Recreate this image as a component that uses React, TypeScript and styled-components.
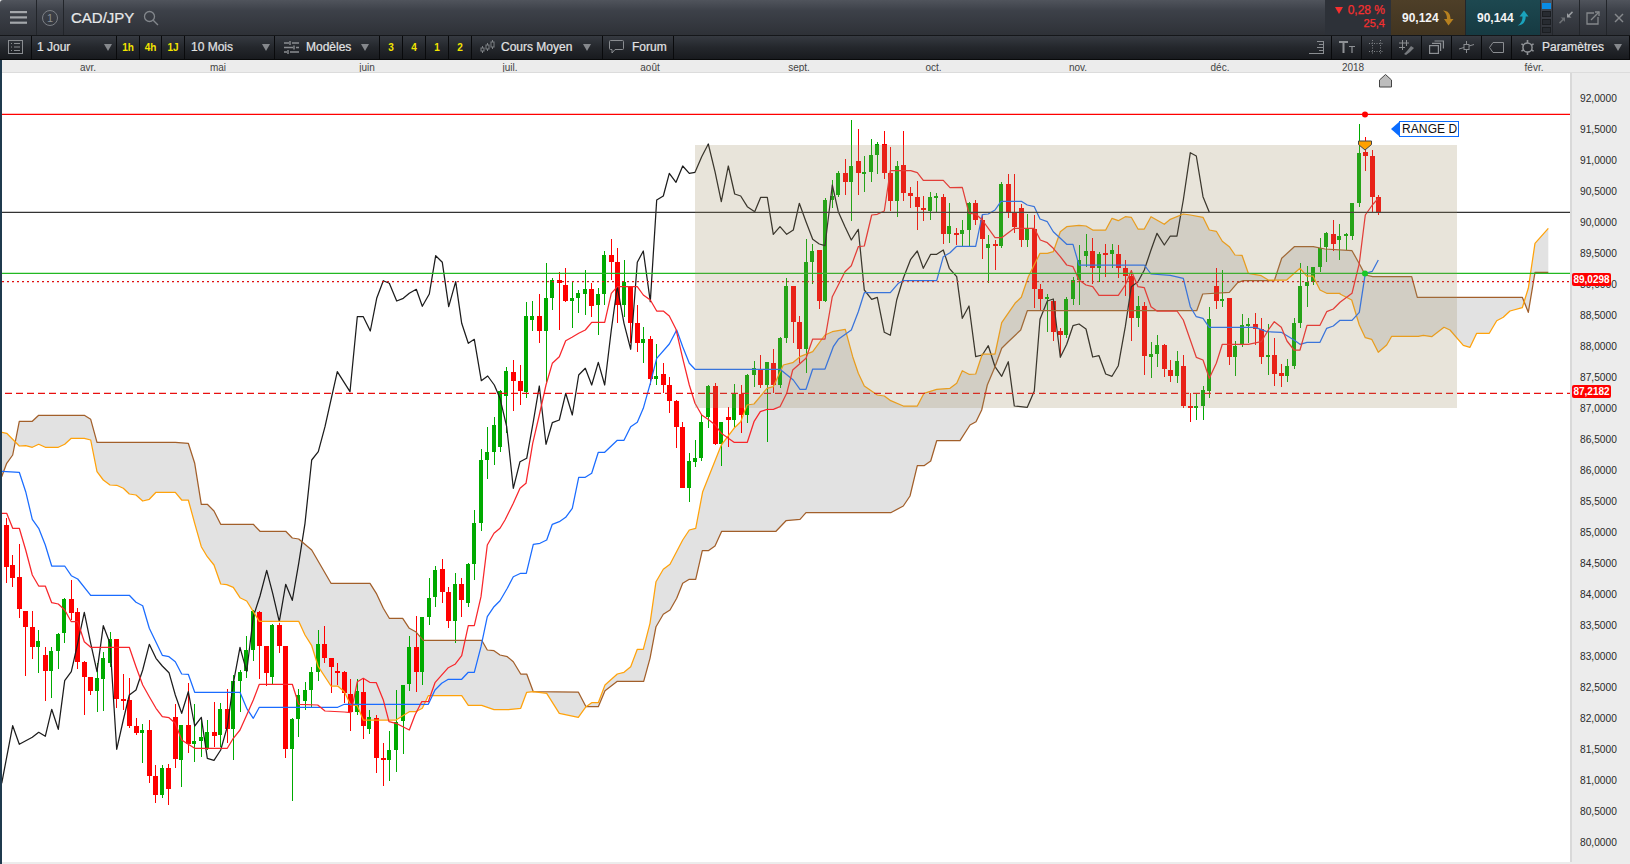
import React from "react";
import styled, { createGlobalStyle } from "styled-components";

const GlobalStyle = createGlobalStyle`
  html, body { margin: 0; padding: 0; width: 1630px; height: 864px; overflow: hidden; background: #ececec; }
  body { font-family: "Liberation Sans", Arial, sans-serif; }
`;

/* ---------- page frame ---------- */
const Page = styled.div`
  width: 1630px; height: 864px; display: flex; flex-direction: column; overflow: hidden;
`;
const TopBar = styled.div`
  height: 35px; flex: none; display: flex; align-items: stretch;
  background: linear-gradient(#50545c 0%, #3d4149 30%, #2e3137 100%);
  border-bottom: 1px solid #15171a; border-top-left-radius: 3px;
`;
const TopCell = styled.div<{ $w: number; $last?: boolean }>`
  width: ${(p) => p.$w}px; flex: none; box-sizing: border-box; display: flex; align-items: center; justify-content: center;
  border-right: ${(p) => (p.$last ? "none" : "1px solid #22252a")};
`;
const StepCircle = styled.div`
  width: 14px; height: 14px; border: 1.5px solid #7c8086; border-radius: 50%; color: #8a8e93;
  font-size: 11px; line-height: 14px; text-align: center;
`;
const Title = styled.div`
  margin-left: 7px; color: #e8e9ea; font-size: 15px; line-height: 35px; -webkit-text-stroke: 0.2px #e8e9ea;
`;
const SearchWrap = styled.div`
  margin-left: 9px; display: flex; align-items: center;
`;
const Grow = styled.div`
  flex: 1;
`;
const Change = styled.div`
  width: 66px; flex: none; box-sizing: border-box; padding: 4px 6px 0 0; background: #2d3138;
  display: flex; flex-direction: column; align-items: flex-end; color: #f62f2f;
  -webkit-text-stroke: 0.25px #f62f2f;
`;
const ChangeLine = styled.div<{ $size: number }>`
  font-size: ${(p) => p.$size}px; line-height: 13px; display: flex; align-items: center; gap: 5px;
`;
const DownTriangle = styled.span`
  width: 0; height: 0; border-left: 4px solid transparent; border-right: 4px solid transparent; border-top: 7px solid #f62f2f;
`;
const Quote = styled.div<{ $bg: string }>`
  width: 75px; flex: none; box-sizing: border-box; padding-left: 11px; display: flex; align-items: center; gap: 3px;
  background: ${(p) => p.$bg}; color: #f4f4f4; font-size: 12px; font-weight: 700; border-right: 1px solid #23262b;
`;
const Layers = styled.div`
  width: 12px; flex: none; box-sizing: border-box; padding: 3px 1px 0 1px; display: flex; flex-direction: column; gap: 2px;
  border-right: 1px solid #23262b;
`;
const LayerDot = styled.div<{ $on?: boolean }>`
  height: 6px; background: ${(p) => (p.$on ? "#0b8ce4" : "#272b31")}; border: ${(p) => (p.$on ? "none" : "1px solid #1b1e22")};
  box-sizing: border-box;
`;
const ToolBar = styled.div`
  height: 23px; flex: none; display: flex; align-items: stretch; color: #e2e3e4; font-size: 12px;
  -webkit-text-stroke: 0.2px #e2e3e4;
  background: linear-gradient(#363a41 0%, #24272c 50%, #181a1e 100%);
  border-bottom: 1px solid #08090a;
`;
const ToolCell = styled.div<{ $w: number; $pl?: number; $pr?: number; $gap?: number }>`
  width: ${(p) => p.$w}px; flex: none; box-sizing: border-box; display: flex; align-items: center;
  justify-content: ${(p) => (p.$pl === undefined ? "center" : "flex-start")};
  padding: 0 ${(p) => p.$pr ?? 0}px 1px ${(p) => p.$pl ?? 0}px; gap: ${(p) => p.$gap ?? 0}px;
  border-right: 1px solid #090a0c;
`;
const QuickPick = styled.span`
  color: #f2e400; font-size: 10px; font-weight: 700; -webkit-text-stroke: 0;
`;
const Caret = styled.span`
  margin-left: auto; width: 0; height: 0; border-left: 4.5px solid transparent; border-right: 4.5px solid transparent;
  border-top: 7px solid #85888c;
`;
const Work = styled.div`
  flex: 1; min-height: 0; display: flex; flex-direction: column; border-left: 2px solid #1f3a4e;
`;
const TimeAxis = styled.div`
  height: 12px; flex: none; display: flex; overflow: hidden; background: #ececec; border-bottom: 1px solid #dcdcdc;
`;
const TimeTick = styled.div<{ $w: number }>`
  width: ${(p) => p.$w}px; flex: none; text-align: center; font-size: 10px; line-height: 15px; color: #444;
`;
const ChartRow = styled.div`
  flex: 1; min-height: 0; display: flex; position: relative;
`;
const ChartArea = styled.div`
  width: 1568px; flex: none; background: #fff; position: relative;
`;
const ChartSvg = styled.svg`
  display: block;
`;
const PriceAxis = styled.div`
  width: 60px; flex: none; box-sizing: border-box; padding: 10px 0 0 8px; overflow: hidden;
  border-left: 2px solid #d9d9d9; background: #ececec;
`;
const PriceLabel = styled.div`
  height: 31px; line-height: 31px; font-size: 10.2px; color: #2a2a2a;
`;
const PriceBadge = styled.div<{ $top: number }>`
  position: absolute; left: 1570px; top: ${(p) => p.$top}px; width: 39px; height: 13px; border-radius: 2px;
  background: #f00; color: #fff; font-size: 10px; font-weight: 700; line-height: 13px; text-align: center;
`;
const RangeTag = styled.div`
  position: absolute; left: 1397px; top: 48px; width: 60px; height: 16px; box-sizing: border-box;
  border: 1px solid #0a6cff; background: #fff; color: #111; font-size: 12px; line-height: 14px; padding-left: 2px;
  letter-spacing: 0.1px; white-space: nowrap;
  &::before {
    content: ""; position: absolute; left: -9px; top: 0; width: 0; height: 0;
    border-top: 7px solid transparent; border-bottom: 7px solid transparent; border-right: 8px solid #0a6cff;
  }
`;
const BottomEdge = styled.div`
  height: 2px; flex: none; background: #ececec;
`;

/* ---------- chart data: points read from crops, [crop origin] + crop px / 3 ---------- */
const seg = (ox: number, oy: number, s: string) =>
  s.trim().split(/\s+/).map((p) => {
    const [x, y] = p.split(",").map(Number);
    return [ox + x / 3, oy + y / 3] as [number, number];
  });
type Pt = [number, number];
const toPath = (pts: Pt[]) => pts.map(([x, y]) => `${x.toFixed(1)},${y.toFixed(1)}`).join(" ");

const chikou: Pt[] = [
  ...seg(0, 400, "5,1150 38,977 58,1033 97,1012 116,997 136,1009 155,928 175,988 194,842 214,815 233,730 253,637 272,730 291,815 310,677 330,730 350,1048 370,960 388,885 408,870 428,810 448,733 468,775 487,798 507,818 526,885 545,940 565,875 584,978 604,952 622,1075 642,1081 662,1050 682,980 700,850 720,742 740,815 760,650 780,588 800,511 818,580 838,665 857,553 877,601 896,490 915,370 935,180 955,155 975,80"),
  ...seg(300, 230, "112,425 150,485 172,260 190,260 211,303 230,205 250,152 268,160 290,213 310,205 328,190 349,178 367,229 388,192 407,77 427,97 446,230 467,155 485,280 505,340 523,328 544,452 563,438 583,465 600,505"),
  ...seg(500, 100, "20,980 40,1165 60,1085 80,1075 100,965 118,858 138,1033 157,968 178,960 197,880 217,945 236,825 256,805 275,855 295,787 314,855 334,690 352,560 372,670 392,748 412,487 430,453 451,605 470,300 490,288 508,220 528,247 548,198 568,220 585,217 605,170 625,132 645,215 664,305 685,198 704,282 722,288 742,320 764,335 782,292 802,292 820,403 840,380 860,403 880,390 898,310 918,365 938,418 958,432 975,437 997,255 1015,335 1035,380 1054,420 1075,388 1093,570 1115,598 1132,592 1153,697 1171,706 1190,600 1210,535 1232,478 1252,453 1270,505 1292,463 1310,463 1330,450 1348,505 1370,530"),
  ...seg(900, 100, "187,655 207,618 227,770 247,765 265,737 285,800 305,829 325,785 343,918 382,922 403,873 420,658 442,603 460,597 481,772 500,733 519,677 537,672 558,687 578,771 597,767 617,822 636,829 655,797 676,680 694,560 714,545 733,510 753,450 771,400 793,435 811,408 831,408 850,300 871,158 889,168 909,290 928,337"),
];
const tenkan: Pt[] = [
  ...seg(0, 400, "5,340 20,340 38,385 58,385 77,450 97,525 116,558 136,558 155,608 175,612 194,630 214,665 233,665 253,725 272,742 388,742 408,800 428,855 448,890 468,925 487,950 507,953 526,970 545,1020 565,1033 584,1045 682,1045 700,1015 720,990 740,945 760,900 778,853 877,853 896,913 953,915 975,933 1033,936 1052,938 1060,905 1072,845 1090,835 1109,847 1129,848 1150,900 1167,965 1188,970 1228,990 1245,945 1265,905 1285,905 1305,848 1345,803 1365,793 1385,767 1405,677 1423,677 1443,590 1462,435 1482,400 1500,385"),
  ...seg(500, 100, "15,1260 40,1210 60,1165 78,1150 98,1030 118,945 138,855 157,790 178,770 197,722 216,712 236,700 256,690 275,667 314,667 334,580 352,560 412,560 430,585 451,600 470,633 490,633 508,648 528,688 548,775 568,855 585,910 605,945 624,958 646,975 664,1000 702,1027 742,1027 762,965 781,935 801,928 820,928 840,920 860,880 878,810 918,775 938,717 975,717 997,590 1015,555 1035,515 1054,497 1075,440 1093,438 1115,345 1132,343 1153,333 1171,212 1232,212 1252,218 1270,241 1330,241 1350,263"),
  ...seg(900, 100, "187,262 207,340 227,342 247,360 285,413 305,413 325,398 343,385 403,385 421,420 442,428 460,445 481,470 500,495 519,500 537,540 558,555 578,560 597,586 655,586 676,555 694,512 714,560 733,563 753,620 771,633 831,633 850,660 871,720 889,772 909,780 928,835 949,790 967,733 1045,733 1084,725 1105,690 1123,665 1144,682 1161,723 1182,750 1200,750 1221,676 1260,676 1280,635 1300,627 1320,607 1356,580"),
  ...seg(1280, 80, "238,550 256,405 277,375 295,355"),
];
const kijun: Pt[] = [
  ...seg(0, 400, "5,214 58,217 77,275 97,358 116,385 136,435 155,498 194,498 214,527 233,537 272,586 388,586 408,607 428,617 448,685 487,766 507,770 526,785 545,822 565,823 584,877 720,877 740,925 760,955 778,922 1013,922 1033,913 1285,913 1305,870 1325,850 1345,838 1385,838 1405,817 1423,817 1443,740 1462,650 1482,620"),
  ...seg(500, 480, "0,362 22,325 40,290 62,280 79,280 100,193 120,190 140,180 157,133 178,125 197,112 217,85"),
  ...seg(500, 100, "236,1132 256,1132 275,1120 295,1057 314,1057 352,1021 372,1021 392,980 412,967 430,925 451,850 470,775 508,732 530,690 548,740 568,790 585,808 840,808 880,840 900,868 918,868 938,807 975,807 1000,740 1015,718 1054,690 1075,635 1093,578 1171,578 1195,550 1210,542 1310,542 1330,470 1350,458 1370,439"),
  ...seg(900, 100, "227,439 247,344 265,342 285,330 303,304 364,304 382,315 403,320 420,357 442,365 460,395 481,415 500,433 519,433 537,495 733,495 753,522 811,526 850,535 871,620 889,650 909,655 928,682 1066,682 1100,695 1144,697 1182,720 1200,733 1221,727 1260,727 1280,685 1300,678 1320,661 1356,661"),
  ...seg(1280, 80, "238,697 256,580 277,574 295,540"),
];
const spanA: Pt[] = [
  ...seg(0, 400, "5,97 20,100 58,138 77,137 97,142 116,133 136,142 175,142 194,133 214,115 253,115 272,120 291,215 310,240 330,255 350,256 370,265 388,282 408,285 428,303 448,298 468,277 526,277 545,300 565,300 584,370 604,440 622,470 642,495 662,552 680,554 700,562 720,593 740,603 778,664 896,664 915,705 935,737 955,800 993,858 1013,858 1033,875 1052,915 1072,917 1090,960 1188,960 1228,935 1247,935 1267,925 1285,887 1385,887 1405,916 1445,916 1482,929 1525,929"),
  ...seg(500, 480, "62,685 80,637 100,635 140,640 178,700 235,712 258,680 275,668 295,668 315,615 352,582 372,577 392,560 412,508 430,508 450,430 468,305 490,268 510,253 548,180 568,150 587,145"),
  ...seg(500, 100, "608,1175 664,1035 702,985 722,965 741,915 762,912 801,865 820,860 850,795 878,788 900,770 938,755 975,705 997,695 1036,688 1058,770 1075,820 1093,858 1132,885 1153,888 1172,902 1210,918 1252,918 1272,880 1310,868 1350,865 1370,850"),
  ...seg(900, 100, "187,812 207,823 227,822 247,762 285,762 305,668 345,610 364,592 385,530 420,460 442,460 460,455 481,395 500,380 537,376 558,378 578,390 617,390 636,355 655,362 676,350 694,352 714,387 733,387 753,350 793,373 811,358 850,342 871,345 909,352 928,390 949,394 967,424 988,440 1005,465 1026,466 1045,520 1084,527 1105,540 1160,540 1200,505 1220,528 1239,528 1260,570 1280,580 1320,580"),
  ...seg(1280, 80, "180,642 215,660 238,735 256,773 275,778 295,817 320,795 335,769 415,769 430,766 455,770 492,742 510,750 550,796 570,802 590,760 628,760 650,722 670,712 690,693 727,683 745,625 765,490 805,445"),
];
const spanB: Pt[] = [
  ...seg(0, 400, "5,230 20,190 38,165 58,64 97,64 116,46 253,46 272,58 291,127 526,127 565,130 584,190 604,313 622,313 642,333 662,373 760,373 780,394 857,394 877,414 896,417 935,450 993,550 1110,550 1129,580 1150,625 1168,655 1208,655 1228,685 1247,695 1270,721 1445,721 1462,750 1482,752"),
  ...seg(500, 480, "0,525 22,530 40,545 62,582 80,582 100,635 235,636 258,680 295,680 315,632 352,604 431,604 450,535 468,440 490,403 510,390 530,355 548,310 568,298 587,298 607,212 625,212 645,198 665,154 828,154 858,122"),
  ...seg(500, 100, "900,1258 918,1238 1172,1238 1210,1218 1230,1188 1252,1097 1272,1097 1292,1083 1310,1022 1380,1022"),
  ...seg(900, 100, "210,975 228,965 245,930 262,855 285,800 305,745 325,725 362,690 382,632 890,632 908,582 988,577 1013,548 1030,542 1123,542 1145,475 1183,440 1240,440 1275,447 1356,452"),
  ...seg(1280, 80, "240,555 256,585 278,590 395,590 412,652 727,652 745,697 765,577 805,577"),
];

type Candle = { x: number; wt: number; bt: number; bb: number; wb: number; up: boolean };
const candles = (ox: number, oy: number, s: string): Candle[] =>
  s.trim().split(/\n/).join(" ").split("|").filter((r) => r.trim()).map((row) => {
    const t = row.trim().split(/\s+/);
    const [x, wt, bt, bb, wb] = t.slice(0, 5).map(Number);
    return { x: Math.floor(ox + x / 3), wt: oy + wt / 3, bt: oy + bt / 3, bb: oy + bb / 3, wb: oy + wb / 3, up: t[5] === "g" };
  });

const allCandles: Candle[] = [
  ...candles(0, 400, `19 355 375 500 548 r|38 465 495 533 560 r|58 432 531 628 655 r|77 633 633 680 827 r|97 633 681 740 776 r|114 690 723 740 820 g|136 740 765 812 902 r|153 742 753 812 893 g|174 700 702 752 808 g|192 594 597 700 728 g|214 540 597 640 660 r|233 625 636 785 806 r|253 783 786 830 944 r|271 830 831 872 885 r|291 790 835 872 935 g|310 755 775 836 932 g|330 697 717 788 800 g|350 717 717 898 925 r|370 822 898 900 930 r|388 835 900 977 985 r|409 955 978 1000 1005 r|427 972 990 998 1088 g|449 960 990 1127 1148 r|466 1095 1128 1184 1210 r|486 1095 1104 1184 1195 g|505 1092 1104 1166 1214 r|526 912 951 1076 1105 r|543 975 976 1079 1160 g|565 850 976 1031 1058 r|582 912 1024 1031 1085 g|603 960 1012 1022 1070 g|621 960 996 1045 1050 g|643 906 996 1007 1040 r|660 910 927 1005 1040 g|682 868 927 987 1030 r|699 825 843 987 1080 g|720 810 816 842 935 g|738 708 750 812 835 g|759 630 632 750 782 g|779 632 636 738 838 r|799 738 738 818 858 r|816 672 675 830 852 g|838 670 675 738 760 r|856 738 738 1046 1073 r|876 955 957 1046 1202 g|894 868 885 956 1010 g|915 845 870 903 930 g|933 800 816 870 920 g|954 690 732 815 842 g|973 678 732 773 788 r|994 773 773 801 878 r|1012 790 814 816 855 r|1033 812 816 880 910 r|1052 838 882 937 992 r|1071 838 873 937 945 g|1090 835 876 977 1018 r|1109 930 951 986 1002 g|1129 945 954 1074 1118 r|1150 1030 1074 1079 1158 r|1167 993 1050 1079 1142 g|1188 870 965 1050 1116 g|1209 855 855 962 1062 g|1227 708 741 852 872 g|1249 648 741 815 875 r|1266 650 651 815 855 g|1287 535 595 651 675 g|1305 498 510 590 620 g|1327 478 507 575 608 r|1345 562 576 662 683 r|1365 520 552 662 728 g|1384 535 552 600 650 r|1404 490 492 608 622 g|1422 330 369 491 540 g|1443 148 180 368 392 g|1461 80 156 180 236 g|1482 50 75 155 194 g`),
  ...candles(500, 100, `0 870 873 1040 1055 g|20 800 813 887 1000 g|40 780 816 842 932 r|60 795 843 872 915 r|78 605 648 875 895 g|98 603 648 660 692 g|118 583 648 692 730 r|138 490 594 692 845 g|156 535 541 594 630 g|178 517 540 548 690 r|196 505 555 602 605 r|216 545 594 602 683 g|234 570 580 594 640 g|255 510 568 582 645 g|274 550 568 617 650 r|294 565 582 614 705 g|312 452 465 582 615 g|334 417 465 486 540 r|352 445 486 616 670 r|372 480 545 616 650 g|392 560 560 668 730 r|412 615 669 728 755 r|429 682 717 728 788 g|451 708 717 838 855 r|468 732 828 838 855 g|490 790 822 854 880 r|508 832 855 903 938 r|529 900 903 980 1043 r|548 965 981 1163 1165 r|567 1060 1083 1163 1205 g|585 1020 1074 1086 1102 g|605 945 965 1074 1082 g|624 855 857 952 985 g|646 850 858 1032 1035 r|663 965 966 1032 1098 g|685 920 951 960 1042 r|702 852 880 960 980 g|724 855 881 945 998 r|741 822 825 945 970 g|762 782 804 825 860 g|781 765 808 855 865 r|801 785 786 855 1025 g|820 747 788 855 880 r|840 710 714 855 865 g|858 535 558 714 730 g|880 558 558 665 728 r|898 648 666 747 788 r|918 418 486 747 818 g|936 432 453 486 552 g|958 450 450 602 627 r|975 295 300 602 605 g|996 240 288 300 325 g|1014 212 220 285 292 g|1036 178 220 245 285 r|1054 60 198 245 362 g|1075 87 183 218 285 r|1093 168 216 218 275 g|1114 117 166 215 245 g|1131 125 132 165 222 g|1153 93 132 218 237 r|1171 142 220 303 333 r|1191 182 198 302 350 g|1210 93 195 280 303 r|1231 262 280 287 325 r|1252 243 290 320 390 r|1270 288 324 331 362 r|1290 277 292 332 360 g|1308 280 288 289 335 g|1330 283 291 402 432 r|1348 310 378 402 430 g`),
  ...candles(900, 100, `169 385 399 401 435 r|187 360 390 402 438 g|207 305 308 390 438 g|227 300 310 360 375 r|247 345 360 417 476 r|264 405 432 444 548 g|287 420 432 435 510 r|303 245 252 438 445 g|325 222 252 335 355 r|343 222 335 380 398 r|364 313 324 419 440 r|381 342 388 419 442 g|403 345 388 567 625 r|421 552 567 597 630 r|442 582 590 597 695 g|460 598 602 695 722 r|481 685 693 705 770 r|498 592 597 705 715 g|519 532 540 597 615 g|537 435 480 540 615 g|558 402 453 468 500 g|578 414 453 503 552 r|597 457 462 503 545 g|617 432 460 461 530 r|636 432 450 461 505 g|655 435 462 503 533 r|676 480 504 528 587 r|694 510 528 653 722 r|714 588 618 653 680 g|733 605 618 767 825 r|753 725 763 770 835 g|771 705 735 762 802 g|793 732 735 807 830 r|811 780 810 827 845 r|831 752 783 827 848 g|850 765 798 917 925 r|871 880 918 920 965 r|889 880 918 920 960 g|909 858 870 917 960 g|927 622 657 872 893 g|949 503 558 602 627 r|967 510 598 603 620 g|988 594 594 770 795 r|1005 722 738 770 827 g|1026 642 676 735 742 g|1045 655 672 675 728 g|1066 640 672 686 735 r|1084 655 687 770 792 r|1105 672 765 770 825 g|1123 715 765 822 858 r|1144 792 820 827 860 r|1161 778 798 827 845 g|1182 655 668 798 806 g|1200 490 558 668 685 g|1221 498 545 557 622 g|1239 500 502 545 555 g|1260 415 443 500 515 g|1278 397 400 442 485 g|1300 360 403 433 452 r|1317 372 408 420 480 g|1339 400 402 404 450 g|1356 308 310 407 420 g`),
  ...candles(1280, 80, `238 132 220 368 382 g|256 170 216 228 272 r|277 210 228 350 395 r|295 345 352 396 405 r`),
];

const prices = Array.from({ length: 25 }, (_, i) => (92 - i * 0.5).toFixed(4).replace(".", ","));
const ticks: [string, number][] = [
  ["avr.", 172], ["mai", 88], ["juin", 210], ["juil.", 76], ["août", 204], ["sept.", 94], ["oct.", 175],
  ["nov.", 114], ["déc.", 170], ["2018", 96], ["févr.", 266],
];

const Chart = () => (
  <ChartSvg width={1568} height={789} viewBox="2 73 1568 789">
    <polygon points={toPath([...spanA, ...[...spanB].reverse()])} fill="#e2e2e2" />
    <g shapeRendering="crispEdges">
      {allCandles.map((c, i) => (
        <g key={i} fill={c.up ? "#00aa00" : "#ff0000"}>
          <rect x={c.x} y={c.wt} width={1} height={Math.max(c.wb - c.wt, 1)} />
          <rect x={c.x - 2} y={c.bt} width={c.up ? 4 : 5} height={Math.max(c.bb - c.bt, 1.5)} />
        </g>
      ))}
    </g>
    <g fill="none" strokeWidth={1.25} strokeLinejoin="round">
      <polyline points={toPath(chikou)} stroke="#1c1c1c" />
      <polyline points={toPath(spanB)} stroke="#a25f2a" />
      <polyline points={toPath(spanA)} stroke="#ffa20a" />
      <polyline points={toPath(kijun)} stroke="#1a6cff" />
      <polyline points={toPath(tenkan)} stroke="#f8262b" />
    </g>
    <g strokeWidth={1.3}>
      <line x1={2} x2={1570} y1={114.4} y2={114.4} stroke="#ff0000" />
      <line x1={2} x2={1570} y1={212.4} y2={212.4} stroke="#333" />
      <line x1={2} x2={1570} y1={273.4} y2={273.4} stroke="#22b822" />
      <line x1={2} x2={1570} y1={281.6} y2={281.6} stroke="#e01010" strokeDasharray="2 3" />
      <line x1={5} x2={1570} y1={393.4} y2={393.4} stroke="#e81010" strokeDasharray="7 4" />
    </g>
    <rect x={695} y={145} width={762} height={263} fill="rgb(159,142,101)" fillOpacity={0.24} />
    <circle cx={1365} cy={114.5} r={3} fill="#ff0000" />
    <circle cx={1365} cy={273.5} r={3} fill="#18c828" />
    <polygon points="1358.5,141 1371.5,141 1371.5,144.5 1365,150 1358.5,144.5" fill="#ffa000" stroke="#444" strokeWidth={1} />
    <polygon points="1385.5,74.5 1391.5,80 1391.5,87 1379.5,87 1379.5,80" fill="#bdbdbd" stroke="#444" strokeWidth={1} />
  </ChartSvg>
);

/* ---------- icons ---------- */
const MenuIcon = () => (
  <svg width={17} height={13} viewBox="0 0 17 13" fill="#a4a7ab">
    <rect y={0} width={17} height={2.2} /><rect y={5.3} width={17} height={2.2} /><rect y={10.6} width={17} height={2.2} />
  </svg>
);
const SearchIcon = () => (
  <svg width={16} height={16} viewBox="0 0 16 16" fill="none" stroke="#83878c" strokeWidth={1.3}>
    <circle cx={6.5} cy={6.5} r={5} /><line x1={10.2} y1={10.2} x2={15} y2={15} />
  </svg>
);
const DownCurve = () => (
  <svg width={12} height={16} viewBox="0 0 12 16" fill="#b8811f">
    <path d="M1 0.5C6 0.5 8.5 4 8.5 9L11.5 9L6.5 15.5L2 9L5 9C5 5.5 4 2.5 1 0.5Z" />
  </svg>
);
const UpCurve = () => (
  <svg width={12} height={16} viewBox="0 0 12 16" fill="#1aa3bd">
    <path d="M0.5 15.5C4.5 13.5 5.5 9.5 5.5 6.5L2.5 6.5L7 0.5L11.5 6.5L8.7 6.5C8.7 11.5 6 15.5 0.5 15.5Z" />
  </svg>
);
const CollapseIcon = () => (
  <svg width={14} height={13} viewBox="0 0 14 13">
    <path d="M14 1.5L10.5 5L12.5 6.5H8V2L9.5 3.7L13 0.3Z" fill="#9a9da1" />
    <path d="M0 11.5L3.5 8L1.5 6.5H6V11L4.5 9.3L1 12.7Z" fill="#6e7175" />
  </svg>
);
const PopoutIcon = () => (
  <svg width={14} height={14} viewBox="0 0 14 14" fill="none" stroke="#85888c" strokeWidth={1.3}>
    <path d="M8 2H1V13H12V6" /><path d="M5 9L13 1" /><path d="M9 1H13V5" />
  </svg>
);
const CloseIcon = () => (
  <svg width={10} height={10} viewBox="0 0 10 10" stroke="#85888c" strokeWidth={1.4}>
    <line x1={1} y1={1} x2={9} y2={9} /><line x1={9} y1={1} x2={1} y2={9} />
  </svg>
);
const ListIcon = () => (
  <svg width={15} height={14} viewBox="0 0 15 14" fill="none" stroke="#8a8d91" strokeWidth={1}>
    <rect x={0.5} y={0.5} width={14} height={13} />
    <path d="M3 3.5H4M6 3.5H12M3 7H4M6 7H12M3 10.5H4M6 10.5H12" />
  </svg>
);
const SlidersIcon = () => (
  <svg width={15} height={13} viewBox="0 0 15 13" fill="none" stroke="#8a8d91" strokeWidth={1.4}>
    <path d="M0 2H5M8 2H15M0 6.5H9M12 6.5H15M0 11H3M6 11H15" />
    <path d="M6 0V4M10 4.5V8.5M4 9V13" />
  </svg>
);
const CandlesIcon = () => (
  <svg width={15} height={14} viewBox="0 0 15 14" fill="none" stroke="#7f8286" strokeWidth={1}>
    <path d="M2.5 6V13M7.5 3V11M12.5 0V9" />
    <rect x={1} y={8} width={3} height={3} fill="#23262b" />
    <rect x={6} y={5} width={3} height={4} fill="#23262b" />
    <rect x={11} y={2} width={3} height={5} fill="#23262b" />
  </svg>
);
const BubbleIcon = () => (
  <svg width={15} height={14} viewBox="0 0 15 14" fill="none" stroke="#8a8d91" strokeWidth={1}>
    <path d="M1.5 0.5H13.5Q14.5 0.5 14.5 1.5V8.5Q14.5 9.5 13.5 9.5H6L3 13V9.5H1.5Q0.5 9.5 0.5 8.5V1.5Q0.5 0.5 1.5 0.5Z" />
  </svg>
);
const IndentIcon = () => (
  <svg width={15} height={14} viewBox="0 0 15 14" stroke="#8a8d91" strokeWidth={1} fill="none">
    <path d="M0 13.5H15M14.5 1V13M8 1.5H14M10 4.5H14M8 7.5H14M10 10.5H14" />
  </svg>
);
const TextSizeIcon = () => (
  <svg width={16} height={12} viewBox="0 0 16 12" fill="#8f9296">
    <path d="M0 0H9V2H5.5V12H3.5V2H0Z" /><path d="M10 5H16V6H13.6V12H12.4V6H10Z" />
  </svg>
);
const GridIcon = () => (
  <svg width={15} height={15} viewBox="0 0 15 15" fill="none" stroke="#7f8286" strokeWidth={1} strokeDasharray="1 1.5">
    <path d="M0 3.5H15M0 11.5H15M3.5 0V15M11.5 0V15" />
  </svg>
);
const HashPenIcon = () => (
  <svg width={16} height={15} viewBox="0 0 16 15" fill="none" stroke="#8a8d91" strokeWidth={1}>
    <path d="M3.5 0V10M7.5 0V6M0 3H10M0 7.5H6" />
    <path d="M5 14L8 11L12 6L15 8L11 12L7 15Z" fill="#777a7e" stroke="none" />
  </svg>
);
const StackIcon = () => (
  <svg width={15} height={14} viewBox="0 0 15 14" fill="none" stroke="#8e9195" strokeWidth={1.2}>
    <rect x={0.6} y={5.6} width={8.8} height={7.8} />
    <path d="M3 3.4H11.6V11M5.5 1H14.4V8.5" />
  </svg>
);
const NodeIcon = () => (
  <svg width={15} height={12} viewBox="0 0 15 12" fill="none" stroke="#8a8d91" strokeWidth={1}>
    <path d="M0 8L5 6.5M10 5L15 3.5M7.5 0V3M7.5 9V12" /><rect x={5} y={3.5} width={5} height={5} />
  </svg>
);
const TagIcon = () => (
  <svg width={15} height={11} viewBox="0 0 15 11" fill="none" stroke="#8a8d91" strokeWidth={1}>
    <path d="M4 0.5H14.5V10.5H4L0.5 5.5Z" />
  </svg>
);
const GearIcon = () => (
  <svg width={15} height={15} viewBox="0 0 15 15" fill="none" stroke="#8e9195" strokeWidth={1.5}>
    <circle cx={7.5} cy={7.5} r={4.6} />
    <path d="M7.5 0V3M7.5 12V15M1.4 3.9L3.9 5.3M11.1 9.7L13.6 11.1M1.4 11.1L3.9 9.7M11.1 5.3L13.6 3.9" strokeWidth={1.6} />
  </svg>
);

const toolIcons = [IndentIcon, TextSizeIcon, GridIcon, HashPenIcon, StackIcon, NodeIcon, TagIcon];

export default function App() {
  return (
    <Page>
      <GlobalStyle />
      <TopBar>
        <TopCell $w={37}><MenuIcon /></TopCell>
        <TopCell $w={27}><StepCircle>1</StepCircle></TopCell>
        <Title>CAD/JPY</Title>
        <SearchWrap><SearchIcon /></SearchWrap>
        <Grow />
        <Change>
          <ChangeLine $size={12}><DownTriangle />0,28 %</ChangeLine>
          <ChangeLine $size={11}>25,4</ChangeLine>
        </Change>
        <Quote $bg="linear-gradient(#4e3f28, #413420)">90,124<DownCurve /></Quote>
        <Quote $bg="linear-gradient(#1d4850, #163a42)">90,144<UpCurve /></Quote>
        <Layers>
          <LayerDot $on /><LayerDot /><LayerDot /><LayerDot />
        </Layers>
        <TopCell $w={27}><CollapseIcon /></TopCell>
        <TopCell $w={27}><PopoutIcon /></TopCell>
        <TopCell $w={23} $last><CloseIcon /></TopCell>
      </TopBar>
      <ToolBar>
        <ToolCell $w={32}><ListIcon /></ToolCell>
        <ToolCell $w={85} $pl={5} $pr={4}>1 Jour<Caret /></ToolCell>
        <ToolCell $w={23}><QuickPick>1h</QuickPick></ToolCell>
        <ToolCell $w={22}><QuickPick>4h</QuickPick></ToolCell>
        <ToolCell $w={23}><QuickPick>1J</QuickPick></ToolCell>
        <ToolCell $w={90} $pl={6} $pr={4}>10 Mois<Caret /></ToolCell>
        <ToolCell $w={105} $pl={9} $pr={10} $gap={7}><SlidersIcon />Modèles<Caret /></ToolCell>
        <ToolCell $w={23}><QuickPick>3</QuickPick></ToolCell>
        <ToolCell $w={23}><QuickPick>4</QuickPick></ToolCell>
        <ToolCell $w={23}><QuickPick>1</QuickPick></ToolCell>
        <ToolCell $w={23}><QuickPick>2</QuickPick></ToolCell>
        <ToolCell $w={131} $pl={8} $pr={11} $gap={6}><CandlesIcon />Cours Moyen<Caret /></ToolCell>
        <ToolCell $w={71} $pl={6} $gap={8}><BubbleIcon />Forum</ToolCell>
        <Grow />
        {toolIcons.map((Icon, i) => (
          <ToolCell key={i} $w={30}><Icon /></ToolCell>
        ))}
        <ToolCell $w={118} $pl={8} $pr={7} $gap={7}><GearIcon />Paramètres<Caret /></ToolCell>
      </ToolBar>
      <Work>
        <TimeAxis>
          {ticks.map(([label, w]) => (
            <TimeTick key={label} $w={w}>{label}</TimeTick>
          ))}
        </TimeAxis>
        <ChartRow>
          <ChartArea>
            <Chart />
            <RangeTag>RANGE D</RangeTag>
          </ChartArea>
          <PriceAxis>
            {prices.map((p) => (
              <PriceLabel key={p}>{p}</PriceLabel>
            ))}
          </PriceAxis>
          <PriceBadge $top={200}>89,0298</PriceBadge>
          <PriceBadge $top={312}>87,2182</PriceBadge>
        </ChartRow>
        <BottomEdge />
      </Work>
    </Page>
  );
}
